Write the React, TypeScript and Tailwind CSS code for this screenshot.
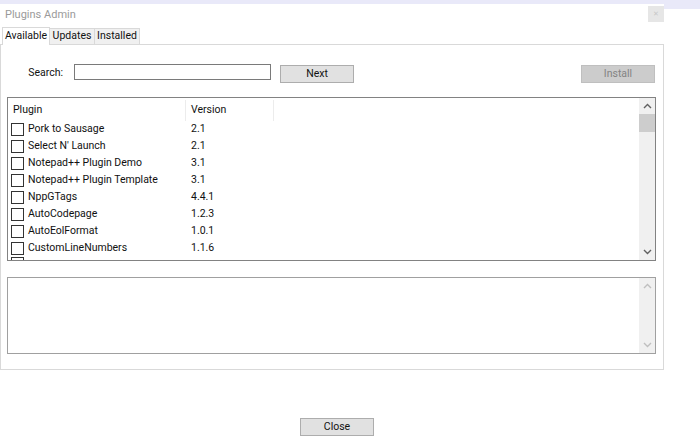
import React from "react";

const plugins = [
  { name: "Pork to Sausage", version: "2.1" },
  { name: "Select N' Launch", version: "2.1" },
  { name: "Notepad++ Plugin Demo", version: "3.1" },
  { name: "Notepad++ Plugin Template", version: "3.1" },
  { name: "NppGTags", version: "4.4.1" },
  { name: "AutoCodepage", version: "1.2.3" },
  { name: "AutoEolFormat", version: "1.0.1" },
  { name: "CustomLineNumbers", version: "1.1.6" },
];

const Chevron = ({ up, faint }: { up?: boolean; faint?: boolean }) => (
  <svg width="9" height="6" viewBox="0 0 9 6">
    <path
      d={up ? "M1 5 L4.5 1.5 L8 5" : "M1 1 L4.5 4.5 L8 1"}
      fill="none"
      stroke={faint ? "#bfbfbf" : "#606060"}
      strokeWidth="1.4"
    />
  </svg>
);

const ScrollBar = ({ disabled }: { disabled?: boolean }) => (
  <div className="flex h-full w-[16px] flex-col bg-[#f0f0f0]">
    <div className="flex h-[16px] items-center justify-center">
      <Chevron up faint={disabled} />
    </div>
    {!disabled && <div className="h-[18px] w-full bg-[#cdcdcd]" />}
    <div className="flex-1" />
    <div className="flex h-[16px] items-center justify-center">
      <Chevron faint={disabled} />
    </div>
  </div>
);

const Button = ({ label, disabled }: { label: string; disabled?: boolean }) => (
  <div
    className={
      disabled
        ? "flex h-[18px] w-[74px] items-center justify-center border border-[#bfbfbf] bg-[#cccccc] text-[#838383]"
        : "flex h-[18px] w-[74px] items-center justify-center border border-[#adadad] bg-[#e1e1e1] text-[#111111]"
    }
  >
    {label}
  </div>
);

export default function App() {
  return (
    <div className="h-[447px] w-[700px] overflow-hidden bg-white font-['Segoe_UI',Roboto,sans-serif] text-[10.5px] leading-none text-[#111111]">
      <div className="h-[4px] w-full bg-[#e9e9f9]" />
      <div className="flex">
        <div className="w-[664px]">
          {/* title row */}
          <div className="flex h-[23px] items-start justify-between">
            <div className="pl-[5px] pt-[5px] text-[11px] text-[#9a9a9a]">Plugins Admin</div>
            <div className="mt-[2px] flex h-[16px] w-[16px] items-center justify-center bg-[#e6e6e6] text-[7px] text-[#c8c8c8]">
              ✕
            </div>
          </div>

          {/* tabs */}
          <div className="flex h-[17px] items-end pl-[2px]">
            <div className="relative z-10 -mb-px flex h-[18px] w-[48px] items-center justify-center border border-b-0 border-[#d9d9d9] bg-white">
              Available
            </div>
            <div className="flex h-[16px] w-[45px] items-center justify-center border-b-0 border-r border-t border-[#d9d9d9] bg-[#f0f0f0]">
              Updates
            </div>
            <div className="flex h-[16px] w-[45px] items-center justify-center border-b-0 border-r border-t border-[#d9d9d9] bg-[#f0f0f0]">
              Installed
            </div>
          </div>

          {/* tab panel */}
          <div className="h-[326px] w-[664px] border border-[#d9d9d9] bg-white pl-[6px]">
            <div className="mt-[19px] flex h-[19px] items-start">
              <div className="w-[56px] pt-[4px] text-right">Search:</div>
              <div className="ml-[11px] h-[16px] w-[197px] border border-[#7a7a7a] bg-white" />
              <div className="ml-[9px] mt-px">
                <Button label="Next" />
              </div>
              <div className="ml-[227px] mt-px">
                <Button label="Install" disabled />
              </div>
            </div>

            {/* plugin list */}
            <div className="mt-[14px] flex h-[164px] w-[649px] border border-[#828282]">
              <div className="flex-1 overflow-hidden">
                <div className="flex h-[23px] items-center pt-[2px]">
                  <div className="flex h-full w-[178px] items-center border-r border-[#ececec] pl-[5px]">Plugin</div>
                  <div className="flex h-full w-[88px] items-center border-r border-[#ececec] pl-[5px]">Version</div>
                </div>
                {plugins.map((p) => (
                  <div key={p.name} className="flex h-[17px] items-center">
                    <div className="flex w-[178px] items-center pl-[3px]">
                      <div className="h-[13px] w-[13px] border border-[#333333] bg-white" />
                      <span className="ml-[4px] whitespace-nowrap">{p.name}</span>
                    </div>
                    <div className="pl-[5px]">{p.version}</div>
                  </div>
                ))}
                <div className="flex h-[17px] items-start pl-[3px]">
                  <div className="h-[13px] w-[13px] border border-[#333333] bg-white" />
                </div>
              </div>
              <ScrollBar />
            </div>

            {/* description */}
            <div className="mt-[16px] flex h-[77px] w-[649px] border border-[#a0a0a0]">
              <div className="flex-1" />
              <ScrollBar disabled />
            </div>
          </div>
        </div>
        <div className="h-[5px] flex-1 bg-[#e9e9f9]" />
      </div>

      <div className="mt-[48px] flex pl-[300px]">
        <Button label="Close" />
      </div>
    </div>
  );
}
